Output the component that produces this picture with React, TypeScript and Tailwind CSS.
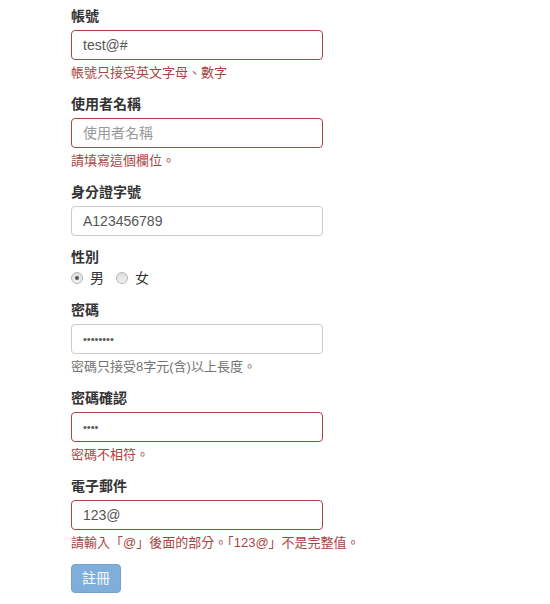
import React from 'react'

const font = "font-['Liberation_Sans','Noto_Sans_CJK_TC',sans-serif]"

function Field({
  label,
  value,
  placeholder,
  error,
  help,
  dots,
}: {
  label: string
  value?: string
  placeholder?: string
  error?: string
  help?: string
  dots?: boolean
}) {
  const border = error ? 'border-[#a94442]' : 'border-[#cccccc]'
  return (
    <div className="mb-[11px]">
      <label className="block text-[14px] leading-[20px] font-bold text-[#333] mb-1">{label}</label>
      <input
        readOnly
        value={value ?? ''}
        placeholder={placeholder}
        className={`block w-[252px] h-[30px] rounded-[4px] border ${border} bg-white px-[11px] ${
          dots ? 'text-[11px] tracking-[0px]' : 'text-[14px]'
        } text-[#555] placeholder:text-[#999] outline-none ${font}`}
      />
      {error && <p className="mt-[3px] text-[13px] leading-[20px] text-[#a94442]">{error}</p>}
      {help && <p className="mt-[3px] text-[13px] leading-[20px] text-[#737373]">{help}</p>}
    </div>
  )
}

function Radio({ checked, label }: { checked?: boolean; label: string }) {
  return (
    <span className="flex items-center gap-[7px]">
      <span className="w-[12px] h-[12px] rounded-full border border-[#b5b5b5] bg-gradient-to-b from-[#dcdcdc] to-[#f2f2f2] flex items-center justify-center">
        {checked && <span className="w-[4px] h-[4px] rounded-full bg-[#555]" />}
      </span>
      <span className="text-[14px] text-[#333]">{label}</span>
    </span>
  )
}

export default function App() {
  return (
    <div className={`min-h-[604px] bg-white pl-[71px] pt-[6px] ${font}`}>
      <Field label="帳號" value="test@#" error="帳號只接受英文字母、數字" />
      <Field label="使用者名稱" placeholder="使用者名稱" error="請填寫這個欄位。" />
      <Field label="身分證字號" value="A123456789" />

      <div className="mb-[11px]">
        <label className="block text-[14px] leading-[20px] font-bold text-[#333]">性別</label>
        <div className="flex items-center h-[22px] gap-[12px]">
          <Radio checked label="男" />
          <Radio label="女" />
        </div>
      </div>

      <Field label="密碼" value="••••••••" dots help="密碼只接受8字元(含)以上長度。" />
      <Field label="密碼確認" value="••••" dots error="密碼不相符。" />
      <Field label="電子郵件" value="123@" error="請輸入「@」後面的部分。「123@」不是完整值。" />

      <button
        disabled
        className="w-[50px] h-[29px] rounded-[4px] border border-[#74a2ce] bg-[#80aedb] text-white text-[14px]"
      >
        註冊
      </button>
    </div>
  )
}
